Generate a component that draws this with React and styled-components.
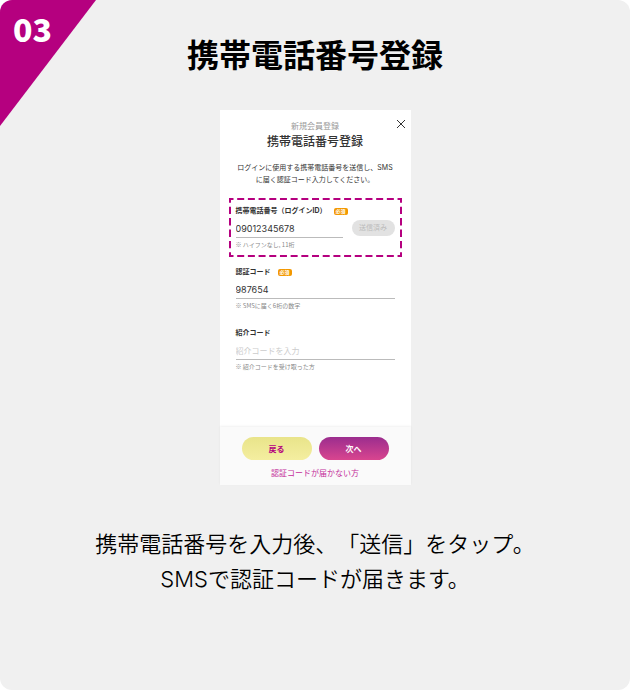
import React from "react";
import styled, { createGlobalStyle } from "styled-components";

const GlobalStyle = createGlobalStyle`
    * {
        box-sizing: border-box;
    }
    body {
        margin: 0;
        background: #fff;
        color: #000;
        font-family: Inter, "Noto Sans CJK JP", sans-serif;
        text-spacing-trim: space-all;
    }
    button, input {
        font-family: inherit;
    }
`
const Card = styled.section`
    position: relative;
    min-height: 100vh;
    padding: 32px 16px 92px;
    display: flex;
    flex-direction: column;
    align-items: center;
    overflow: hidden;
    border-radius: 12px;
    background: #f0f0f0;
`
const StepFlag = styled.div`
    position: absolute;
    top: 0;
    left: 0;
    width: 96px;
    height: 126px;
    padding: 8px 13px;
    clip-path: polygon(0 0, 100% 0, 0 100%);
    background: #b5007f;
    color: #fff;
    font: 900 32px/40px "Noto Sans CJK JP", sans-serif;
`
const Title = styled.h2`
    margin: 0;
    font-size: 32px;
    line-height: 48px;
`
const Caption = styled.p`
    margin: 42px 0 0;
    font-size: 22px;
    font-weight: 350;
    line-height: 35px;
    text-align: center;
`
const Phone = styled.form`
    position: relative;
    width: 100%;
    max-width: 191px;
    margin-top: 30px;
    background: #fff;
    color: #333;
`
const PhoneHeader = styled.header`
    padding-top: 10px;
    text-align: center;
`
const Eyebrow = styled.p`
    margin: 0;
    color: #999;
    font-size: 8px;
    line-height: 12px;
`
const PhoneTitle = styled.h3`
    margin: 0;
    font-size: 12px;
    font-weight: 500;
    line-height: 20px;
`
const Lead = styled.p`
    margin: 10px 0 0;
    font-size: 7px;
    line-height: 12px;
`
const CloseButton = styled.button`
    position: absolute;
    top: 8px;
    right: 4px;
    width: 12px;
    height: 12px;
    padding: 0;
    border: 0;
    background: none;

    svg {
        display: block;
    }
`
const Fields = styled.div`
    padding: 12px 9px 48px;
    display: flex;
    flex-direction: column;
    gap: 2px;
`
const Field = styled.div`
    position: relative;
    height: 59px;
    padding: 7px 7px 0;
`
const Highlight = styled.svg`
    position: absolute;
    top: 0;
    left: 0;
    width: 100%;
    height: 100%;
    pointer-events: none;
`
const LabelRow = styled.div`
    display: flex;
    align-items: center;
    gap: 7px;
    height: 12px;

    label {
        font-size: 7px;
        font-weight: 700;
        line-height: 12px;
        white-space: nowrap;
    }
`
const Required = styled.span`
    width: 14px;
    border-radius: 2px;
    background: #f39800;
    color: #fff;
    font-size: 5px;
    font-weight: 700;
    line-height: 7px;
    text-align: center;
`
const InputRow = styled.div`
    display: flex;
    align-items: center;
    gap: 9px;
`
const TextInput = styled.input`
    flex: 1;
    min-width: 0;
    height: 21px;
    padding: 4px 0 1px;
    border: 0;
    border-bottom: 1px solid #bbb;
    outline: 0;
    background: none;
    color: #333;
    font-size: 9px;

    &::placeholder {
        color: #ccc;
        font-size: 8px;
    }
`
const SentButton = styled.button`
    width: 43px;
    height: 16px;
    padding: 0;
    border: 0;
    border-radius: 8px;
    background: #e2e2e2;
    color: #bbb;
    font-size: 7px;
    line-height: 16px;
`
const Hint = styled.p`
    margin: 1px 0 0;
    color: #888;
    font-family: "Noto Sans CJK JP", sans-serif;
    font-size: 6px;
    line-height: 11px;
`
const PhoneFooter = styled.footer`
    padding: 10px 22px 6px;
    background: #fafafa;
    box-shadow: 0 -1px 2px rgba(0, 0, 0, 0.06);
    text-align: center;

    a {
        display: block;
        margin-top: 7px;
        color: #c4309a;
        font-size: 8px;
        line-height: 12px;
        text-decoration: none;
    }
`
const Actions = styled.div`
    display: flex;
    gap: 7px;
`
const PillButton = styled.button`
    flex: 1;
    height: 23px;
    padding: 0;
    border: 0;
    border-radius: 12px;
    background: ${props => props.$primary ? "linear-gradient(#9b2d8e, #d9458f)" : "linear-gradient(#e9e48a, #f4eea0)"};
    color: ${props => props.$primary ? "#fff" : "#b5007f"};
    font-size: 8px;
    font-weight: 700;
`

function FormField({ id, label, required, hint, highlighted, children, ...input }) {
    return (
        <Field>
            <LabelRow>
                <label htmlFor={id}>{label}</label>
                {required && <Required>必須</Required>}
            </LabelRow>
            <InputRow>
                <TextInput id={id} aria-describedby={`${id}-hint`} {...input} />
                {children}
            </InputRow>
            <Hint id={`${id}-hint`}>{hint}</Hint>
            {highlighted && (
                <Highlight viewBox="0 0 173 59" preserveAspectRatio="none" aria-hidden="true">
                    <g fill="none" stroke="#b5007f" strokeWidth="2">
                        <path d="M1 1h171M1 58h171" strokeDasharray="7 3.69" strokeDashoffset="3.5" />
                        <path d="M1 1v57M172 1v57" strokeDasharray="7.4 4" strokeDashoffset="3.7" />
                        <path d="M0 1h2M171 1h2M0 58h2M171 58h2" />
                    </g>
                </Highlight>
            )}
        </Field>
    )
}

export default function App() {
    return (
        <>
            <GlobalStyle />
            <Card>
                <StepFlag>03</StepFlag>
                <Title>携帯電話番号登録</Title>
                <Phone onSubmit={e => e.preventDefault()}>
                    <CloseButton type="button" aria-label="閉じる">
                        <svg width="12" height="12" viewBox="0 0 12 12" stroke="#333" strokeWidth="1" aria-hidden="true">
                            <path d="M2 2l8 8M10 2l-8 8" />
                        </svg>
                    </CloseButton>
                    <PhoneHeader>
                        <Eyebrow>新規会員登録</Eyebrow>
                        <PhoneTitle>携帯電話番号登録</PhoneTitle>
                        <Lead>ログインに使用する携帯電話番号を送信し、SMS<br />に届く認証コード入力してください。</Lead>
                    </PhoneHeader>
                    <Fields>
                        <FormField id="tel" type="tel" label="携帯電話番号（ログインID）" required hint="※ ハイフンなし, 11桁" defaultValue="09012345678" highlighted>
                            <SentButton type="button" disabled>送信済み</SentButton>
                        </FormField>
                        <FormField id="code" type="text" label="認証コード" required hint="※ SMSに届く6桁の数字" defaultValue="987654" />
                        <FormField id="referral" type="text" label="紹介コード" hint="※ 紹介コードを受け取った方" placeholder="紹介コードを入力" />
                    </Fields>
                    <PhoneFooter>
                        <Actions>
                            <PillButton type="button">戻る</PillButton>
                            <PillButton type="submit" $primary>次へ</PillButton>
                        </Actions>
                        <a href="#help">認証コードが届かない方</a>
                    </PhoneFooter>
                </Phone>
                <Caption>携帯電話番号を入力後、「送信」をタップ。<br />SMSで認証コードが届きます。</Caption>
            </Card>
        </>
    )
}
